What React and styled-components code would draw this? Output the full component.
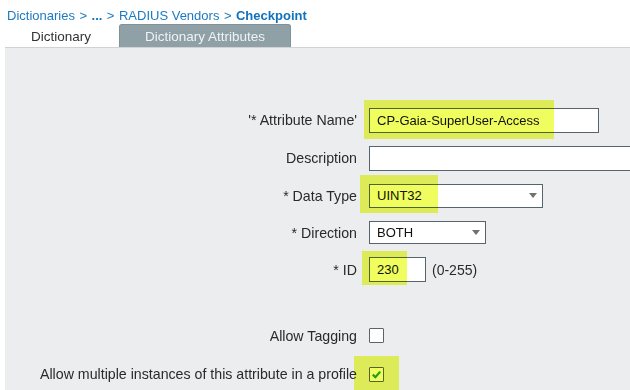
import React from 'react';
import styled, { createGlobalStyle } from 'styled-components';

const GlobalStyle = createGlobalStyle`
  html, body {
    margin: 0;
    padding: 0;
    background: #ffffff;
    overflow: hidden;
  }
  body {
    font-family: 'Liberation Sans', Arial, sans-serif;
    color: #222;
  }
`;

const Page = styled.div`
  width: 630px;
  height: 390px;
  display: flex;
  flex-direction: column;
  overflow: hidden;
`;

const Header = styled.div`
  height: 51px;
  display: flex;
  flex-direction: column;
  padding-left: 5px;
`;

const Breadcrumb = styled.div`
  display: flex;
  gap: 4.5px;
  padding: 8px 0 0 2px;
  font-size: 13px;
  line-height: 16px;
  color: #1b7ac2;
`;

const Crumb = styled.span`
  font-weight: ${(p) => (p.$current ? 700 : 400)};
  color: ${(p) => (p.$current ? '#0f72bd' : '#1b7ac2')};
`;

const Tabs = styled.div`
  display: flex;
  gap: 2px;
  margin-top: 0;
`;

const Tab = styled.div`
  height: 23px;
  padding: 0 25px;
  display: flex;
  align-items: center;
  font-size: 13.5px;
  box-sizing: border-box;
  border-radius: 3px 3px 0 0;
  color: ${(p) => (p.$active ? '#eef3f4' : '#333')};
  background: ${(p) => (p.$active ? '#8fa1a7' : 'transparent')};
  border: 1px solid ${(p) => (p.$active ? '#7f9298' : 'transparent')};
  border-bottom: none;
`;

const Panel = styled.div`
  flex: 1;
  margin-left: 5px;
  background: #ecedef;
  border-top: 1px solid #d2d2d2;
  padding-top: 53px;
  display: flex;
  flex-direction: column;
`;

const Row = styled.div`
  height: ${(p) => p.$h}px;
  display: grid;
  grid-template-columns: 352px 1fr;
  column-gap: 12px;
  align-items: center;
`;

const Spacer = styled.div`
  height: ${(p) => p.$h}px;
`;

const Label = styled.label`
  text-align: right;
  font-size: 14.2px;
  color: #2a2a2a;
  white-space: nowrap;
`;

const Control = styled.div`
  display: flex;
  align-items: center;
  gap: 6px;
`;

const Anchor = styled.div`
  position: relative;
  display: inline-flex;
`;

const Highlight = styled.div`
  position: absolute;
  background: #effd5e;
  mix-blend-mode: multiply;
  pointer-events: none;
`;

const TextBox = styled.div`
  box-sizing: border-box;
  height: ${(p) => p.$height || 25}px;
  width: ${(p) => p.$width}px;
  background: #fff;
  border: 1px solid #56656d;
  display: flex;
  align-items: center;
  padding-left: 7px;
  font-size: 13px;
  color: #111;
`;

const SelectBox = styled(TextBox)`
  justify-content: space-between;
  padding-right: 5px;
`;

const Arrow = styled.span`
  width: 0;
  height: 0;
  border-left: 4px solid transparent;
  border-right: 4px solid transparent;
  border-top: 5px solid #707070;
`;

const Hint = styled.span`
  font-size: 14px;
  color: #2a2a2a;
`;

const Checkbox = styled.div`
  box-sizing: border-box;
  width: 15px;
  height: 15px;
  background: #fff;
  border: 1px solid #5e6468;
  border-radius: 1px;
  display: flex;
  align-items: center;
  justify-content: center;
`;

const Check = () => (
  <svg width="11" height="11" viewBox="0 0 11 11">
    <path d="M1.8 5.6 L4.4 8.2 L9.2 2.6" fill="none" stroke="#1f9e45" strokeWidth="2.2" />
  </svg>
);

export default function App() {
  return (
    <Page>
      <GlobalStyle />
      <Header>
        <Breadcrumb>
          <Crumb>Dictionaries</Crumb>
          <Crumb>&gt;</Crumb>
          <Crumb $current>...</Crumb>
          <Crumb>&gt;</Crumb>
          <Crumb>RADIUS Vendors</Crumb>
          <Crumb>&gt;</Crumb>
          <Crumb $current>Checkpoint</Crumb>
        </Breadcrumb>
        <Tabs>
          <Tab>Dictionary</Tab>
          <Tab $active>Dictionary Attributes</Tab>
        </Tabs>
      </Header>
      <Panel>
        <Row $h={38}>
          <Label>'* Attribute Name'</Label>
          <Control>
            <Anchor>
              <TextBox $width={230}>CP-Gaia-SuperUser-Access</TextBox>
              <Highlight style={{ left: -5, top: -8, width: 190, height: 39 }} />
            </Anchor>
          </Control>
        </Row>
        <Row $h={38}>
          <Label>Description</Label>
          <Control>
            <TextBox $width={290} />
          </Control>
        </Row>
        <Row $h={37}>
          <Label>* Data Type</Label>
          <Control>
            <Anchor>
              <SelectBox $width={174} $height={24}>
                UINT32
                <Arrow />
              </SelectBox>
              <Highlight style={{ left: -9, top: -9, width: 78, height: 38 }} />
            </Anchor>
          </Control>
        </Row>
        <Row $h={37}>
          <Label>* Direction</Label>
          <Control>
            <SelectBox $width={117} $height={23}>
              BOTH
              <Arrow />
            </SelectBox>
          </Control>
        </Row>
        <Row $h={37}>
          <Label>* ID</Label>
          <Control>
            <Anchor>
              <TextBox $width={57}>230</TextBox>
              <Highlight style={{ left: -7, top: -6, width: 45, height: 34 }} />
            </Anchor>
            <Hint>(0-255)</Hint>
          </Control>
        </Row>
        <Spacer $h={29} />
        <Row $h={37}>
          <Label>Allow Tagging</Label>
          <Control>
            <Checkbox />
          </Control>
        </Row>
        <Row $h={40}>
          <Label>Allow multiple instances of this attribute in a profile</Label>
          <Control>
            <Anchor>
              <Checkbox>
                <Check />
              </Checkbox>
              <Highlight style={{ left: -15, top: -11, width: 45, height: 34 }} />
            </Anchor>
          </Control>
        </Row>
      </Panel>
    </Page>
  );
}
